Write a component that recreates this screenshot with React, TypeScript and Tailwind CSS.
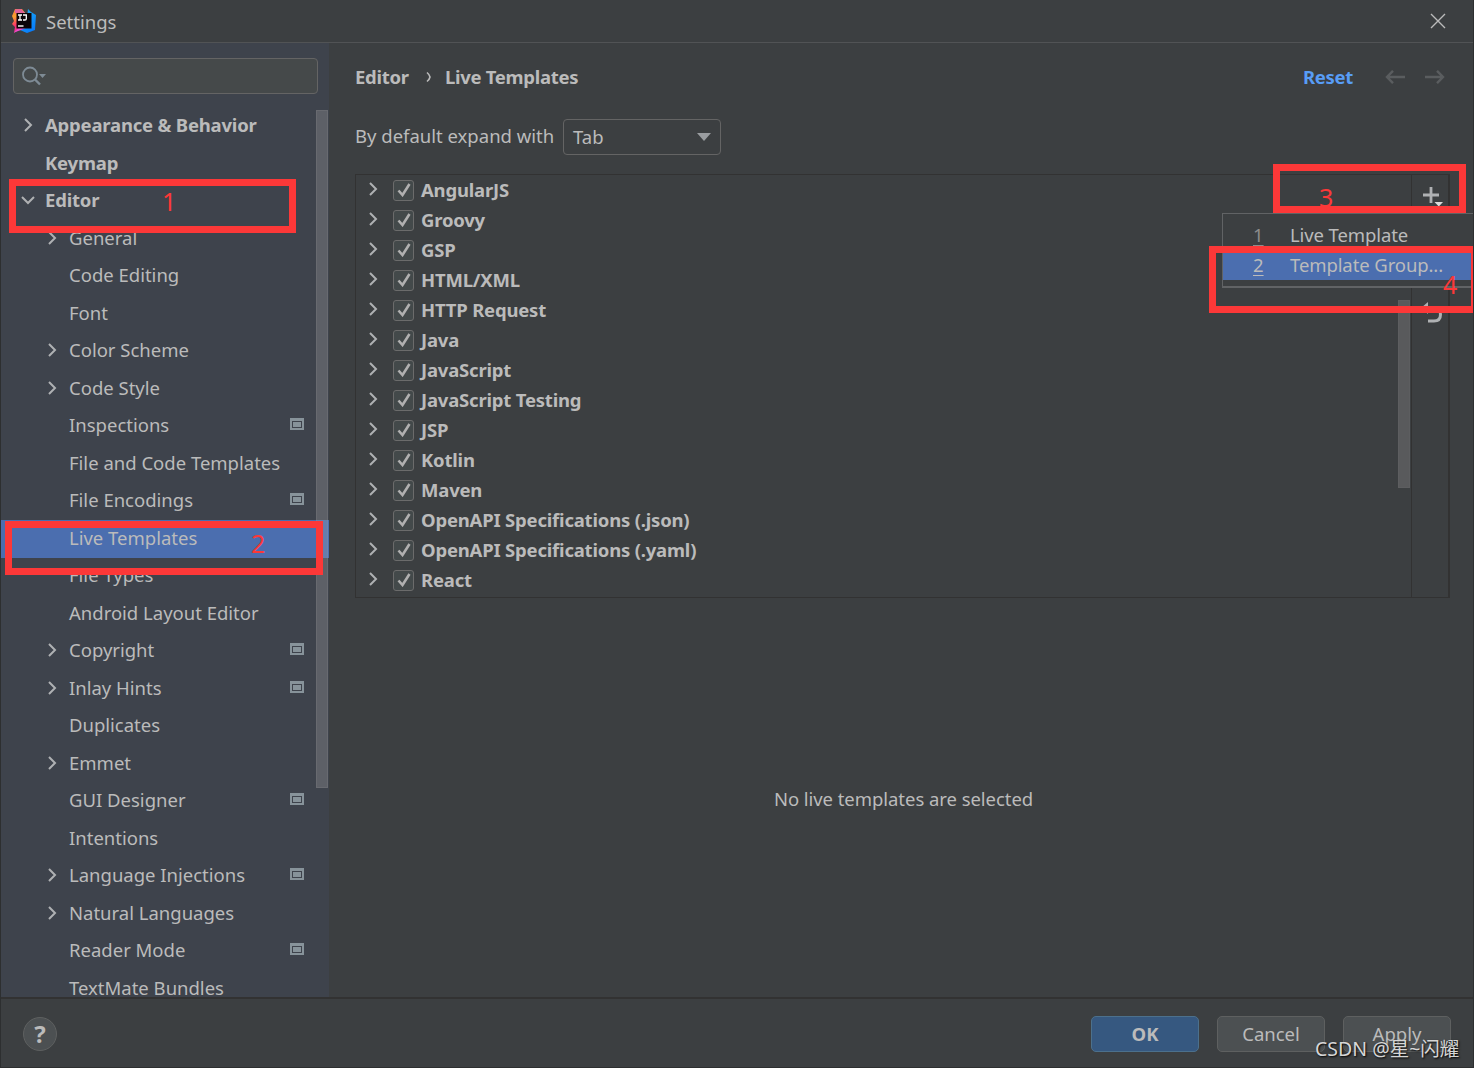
import type { ReactNode } from "react";
import clsx from "clsx";

type TreeItem = {
  label: string;
  level: 0 | 1;
  state?: "open" | "closed";
  projectLevel?: boolean;
  selected?: boolean;
};

const TREE: TreeItem[] = [
  { label: "Appearance & Behavior", level: 0, state: "closed" },
  { label: "Keymap", level: 0 },
  { label: "Editor", level: 0, state: "open" },
  { label: "General", level: 1, state: "closed" },
  { label: "Code Editing", level: 1 },
  { label: "Font", level: 1 },
  { label: "Color Scheme", level: 1, state: "closed" },
  { label: "Code Style", level: 1, state: "closed" },
  { label: "Inspections", level: 1, projectLevel: true },
  { label: "File and Code Templates", level: 1 },
  { label: "File Encodings", level: 1, projectLevel: true },
  { label: "Live Templates", level: 1, selected: true },
  { label: "File Types", level: 1 },
  { label: "Android Layout Editor", level: 1 },
  { label: "Copyright", level: 1, state: "closed", projectLevel: true },
  { label: "Inlay Hints", level: 1, state: "closed", projectLevel: true },
  { label: "Duplicates", level: 1 },
  { label: "Emmet", level: 1, state: "closed" },
  { label: "GUI Designer", level: 1, projectLevel: true },
  { label: "Intentions", level: 1 },
  { label: "Language Injections", level: 1, state: "closed", projectLevel: true },
  { label: "Natural Languages", level: 1, state: "closed" },
  { label: "Reader Mode", level: 1, projectLevel: true },
  { label: "TextMate Bundles", level: 1 },
];

const GROUPS = [
  "AngularJS",
  "Groovy",
  "GSP",
  "HTML/XML",
  "HTTP Request",
  "Java",
  "JavaScript",
  "JavaScript Testing",
  "JSP",
  "Kotlin",
  "Maven",
  "OpenAPI Specifications (.json)",
  "OpenAPI Specifications (.yaml)",
  "React",
];

function Chevron({ open }: { open?: boolean }) {
  return (
    <svg width="14" height="14" viewBox="0 0 14 14" fill="none" stroke="#afb1b3" strokeWidth="2">
      <path d={open ? "M1 4l6 6 6-6" : "M4 1l6 6-6 6"} />
    </svg>
  );
}

function IdeaLogo() {
  return (
    <svg width="24" height="24" viewBox="0 0 24 24">
      <defs>
        <linearGradient id="warm" x1="0" y1="0" x2="0.3" y2="1">
          <stop offset="0" stopColor="#fc7a3c" />
          <stop offset="0.35" stopColor="#f9a12e" />
          <stop offset="0.7" stopColor="#fb2f6d" />
          <stop offset="1" stopColor="#e23fb0" />
        </linearGradient>
        <linearGradient id="cool" x1="0" y1="0" x2="0.6" y2="1">
          <stop offset="0" stopColor="#1fb5f5" />
          <stop offset="1" stopColor="#087cfa" />
        </linearGradient>
      </defs>
      <path d="M3 0l7 0 4 5v13l-6 2-6 4 1-6-3-3 2-3-2-5z" fill="url(#warm)" />
      <path d="M3 .5L9 0l4 4-5 1-5-1z" fill="#e0609a" />
      <path d="M16 0l3 3 5 3-1 15-8 3-7-3 6-4z" fill="url(#cool)" />
      <path d="M2 23.500l5-4.500h7l-5 2z" fill="#f04bd0" />
      <rect x="4.500" y="4" width="15" height="15.500" fill="#0b0508" />
      <path
        d="M6 6h4M8 6v5M6 11h4M11 6h3.300v3.700q0 1.300-1.300 1.300h-2"
        stroke="#fff"
        strokeWidth="1.300"
        fill="none"
      />
      <path d="M6 17h5.500" stroke="#fff" strokeWidth="1.400" />
    </svg>
  );
}

function ProjectIcon() {
  return (
    <svg width="14" height="12" viewBox="0 0 14 12" fill="#87939a">
      <path fillRule="evenodd" d="M0 0h14v12H0zM2 3v7h10V3z" />
      <path d="M3 4h8v5H3z" />
    </svg>
  );
}

function TreeRow({ item }: { item: TreeItem }) {
  return (
    <div
      className={clsx(
        "flex h-[37.5px] shrink-0 items-center pr-[25px]",
        item.level === 0 ? "pl-5 font-bold tracking-[-0.2px]" : "pl-11",
        item.selected && "bg-[#4b6eaf]",
      )}
    >
      <span className="w-6 pb-0.5">{item.state && <Chevron open={item.state === "open"} />}</span>
      <span className="flex-1 pb-0.5 whitespace-nowrap">{item.label}</span>
      {item.projectLevel && (
        <span className="pb-1">
          <ProjectIcon />
        </span>
      )}
    </div>
  );
}

function Sidebar() {
  return (
    <aside className="relative flex w-[328px] shrink-0 flex-col overflow-hidden bg-[#3e434c]">
      <div className="mx-3 mt-[15px] flex h-9 w-[305px] shrink-0 items-center rounded border border-[#646464] bg-[#45494a] pl-2">
        <svg width="26" height="20" viewBox="0 0 26 20" fill="none" stroke="#7e8b95" strokeWidth="1.800">
          <circle cx="8" cy="8.500" r="7" />
          <path d="M13 13.500l5 5" strokeWidth="2.400" />
          <path d="M17 8h7l-3.500 4z" fill="#7e8b95" stroke="none" />
        </svg>
      </div>
      <nav className="mt-[13.5px] flex flex-col">
        {TREE.map((item) => (
          <TreeRow key={item.label} item={item} />
        ))}
      </nav>
      <div className="absolute top-[67px] right-px h-[678px] w-3 border border-[#a6a6a6]/15 bg-[#a6a6a6]/30" />
    </aside>
  );
}

function Breadcrumbs() {
  return (
    <div className="flex h-[68px] items-center font-bold tracking-[-0.3px]">
      <span className="w-[54px]">Editor</span>
      <svg
        className="mr-[13px] ml-[17px] shrink-0"
        width="6"
        height="12"
        viewBox="0 0 6 12"
        fill="none"
        stroke="#bbb"
        strokeWidth="1.600"
      >
        <path d="M1 1.500q2.500 2 3 4.500q-.5 2.500-3 4.500" />
      </svg>
      <span>Live Templates</span>
      <span className="ml-auto text-[#589df6]">Reset</span>
      <div className="ml-8 flex gap-5 pr-[5px]">
        <svg width="20" height="14" viewBox="0 0 20 14" fill="none" stroke="#5a5d5f" strokeWidth="2.400">
          <path d="M8 .8L2 7l6 6.200M2 7h18" />
        </svg>
        <svg width="20" height="14" viewBox="0 0 20 14" fill="none" stroke="#5a5d5f" strokeWidth="2.400">
          <path d="M12 .8L18 7l-6 6.200M18 7H0" />
        </svg>
      </div>
    </div>
  );
}

function GroupRow({ name }: { name: string }) {
  return (
    <div className="flex h-[30px] items-center pl-2.5 font-bold tracking-[-0.2px]">
      <span className="w-[27px] pb-0.5">
        <Chevron />
      </span>
      <span className="flex size-[21px] items-center justify-center rounded-[3px] border border-[#6b6b6b] bg-[#43494a]">
        <svg width="14" height="14" viewBox="0 0 14 14" fill="none" stroke="#b0b0b0" strokeWidth="2.600">
          <path d="M1.500 7.500l4 4.500L12.500 1" />
        </svg>
      </span>
      <span className="ml-[7px]">{name}</span>
    </div>
  );
}

function TemplateList() {
  return (
    <div className="relative flex h-[424px] border border-r-2 border-[#323232]">
      <div className="flex-1">
        {GROUPS.map((name) => (
          <GroupRow key={name} name={name} />
        ))}
      </div>
      <div className="flex w-[37px] flex-col items-center border-l border-[#323232]">
        <svg className="mt-3 ml-1.5" width="22" height="22" viewBox="0 0 22 22" fill="none">
          <path d="M9 0v16M1 8h16" stroke="#afb1b3" strokeWidth="2.800" />
          <path d="M12.500 15h8.500l-4.200 4.500z" fill="#dcdcdc" />
        </svg>
        <svg className="mt-[93px] ml-1.5" width="20" height="22" viewBox="0 0 20 22" fill="none">
          <path d="M5 0v12L-2 6z" fill="#afb1b3" />
          <path d="M5 6h6q6.500 0 6.500 6.500t-6.500 6.500H5" stroke="#afb1b3" strokeWidth="3" />
        </svg>
      </div>
      <div className="absolute top-[125px] right-[38px] h-[188px] w-3 border border-[#5d5e60] bg-[#595a5c]" />
    </div>
  );
}

function AddPopup() {
  return (
    <div className="absolute top-[213px] left-[1221px] h-[75px] w-[260px] border border-b-2 border-[#616365] bg-[#3c3f41] pt-1.5">
      {["Live Template", "Template Group..."].map((label, i) => (
        <div key={label} className={clsx("flex h-[30px] items-center pl-[30px]", i === 1 && "bg-[#4b6eaf]")}>
          <span className={clsx("w-[37px] underline underline-offset-3", i === 0 && "text-[#8c8c8c]")}>{i + 1}</span>
          <span className="tracking-[-0.1px]">{label}</span>
        </div>
      ))}
    </div>
  );
}

function Mark({ box, num, children }: { box: string; num: string; children: ReactNode }) {
  return (
    <>
      <div className={clsx("absolute border-7 border-[#fc3838]", box)} />
      <span className={clsx("absolute text-[25px] leading-6 text-[#fc3838]", num)}>{children}</span>
    </>
  );
}

function DialogButton({ primary, children }: { primary?: boolean; children: ReactNode }) {
  return (
    <button
      className={clsx(
        "h-9 w-[108px] rounded-[5px] border pt-px",
        primary ? "border-[#4c708c] bg-[#365880] font-bold" : "border-[#5e6060] bg-[#4c5052]",
      )}
    >
      {children}
    </button>
  );
}

export default function App() {
  return (
    <div className="relative flex h-[1068px] w-[1474px] flex-col overflow-hidden border-x border-b border-[#2d2f30] bg-[#3c3f41] font-['Noto_Sans','Noto_Sans_CJK_SC',sans-serif] text-[18.5px] leading-6 text-[#bbbbbb]">
      <header className="flex h-[43px] shrink-0 items-center border-b border-[#515355] pl-[11px]">
        <IdeaLogo />
        <span className="ml-2.5 pt-0.5">Settings</span>
        <svg className="mr-[27px] ml-auto" width="16" height="16" viewBox="0 0 16 16" stroke="#bbb" strokeWidth="1.400">
          <path d="M1 1l14 14M15 1L1 15" />
        </svg>
      </header>

      <div className="flex min-h-0 flex-1">
        <Sidebar />
        <main className="flex min-w-0 flex-1 flex-col pr-[23px] pl-[26px]">
          <Breadcrumbs />
          <div className="mt-[7.5px] flex h-9 items-center">
            <span className="w-[198px] pb-0.5 whitespace-nowrap">By default expand with</span>
            <div className="ml-2.5 flex h-9 w-[158px] items-center justify-between rounded border border-[#646464] px-[9px]">
              <span>Tab</span>
              <svg width="14" height="8" viewBox="0 0 14 8">
                <path d="M0 0h14L7 8z" fill="#9a9da0" />
              </svg>
            </div>
          </div>
          <div className="mt-[19.5px]">
            <TemplateList />
          </div>
          <div className="flex flex-1 items-center justify-center pt-[3px] pl-0.5 tracking-[-0.05px]">
            No live templates are selected
          </div>
        </main>
      </div>

      <footer className="flex h-[70px] shrink-0 items-center gap-[18px] border-t-2 border-[#323232] pt-px pr-[22px] pl-[22px]">
        <button className="mr-auto flex size-[34px] items-center justify-center rounded-full border border-[#5e6060] bg-[#4c5052] text-2xl font-bold">
          ?
        </button>
        <DialogButton primary>OK</DialogButton>
        <DialogButton>Cancel</DialogButton>
        <DialogButton>Apply</DialogButton>
      </footer>

      <AddPopup />

      <Mark box="top-[179px] left-[8px] h-[54px] w-[287px]" num="top-[189px] left-[161px]">1</Mark>
      <Mark box="top-[521px] left-[4px] h-[54px] w-[318px]" num="top-[531px] left-[250px]">2</Mark>
      <Mark box="top-[164px] left-[1272px] h-[49px] w-[193px]" num="top-[185px] left-[1318px]">3</Mark>
      <Mark box="top-[246px] left-[1208px] h-[67px] w-[269px]" num="top-[272px] left-[1442px]">4</Mark>

      <div className="absolute top-[1037px] left-[1314px] text-[19.5px] whitespace-nowrap text-[#d6d6d6] [text-shadow:1px_1px_2px_#000]">
        CSDN @星~闪耀
      </div>
    </div>
  );
}
